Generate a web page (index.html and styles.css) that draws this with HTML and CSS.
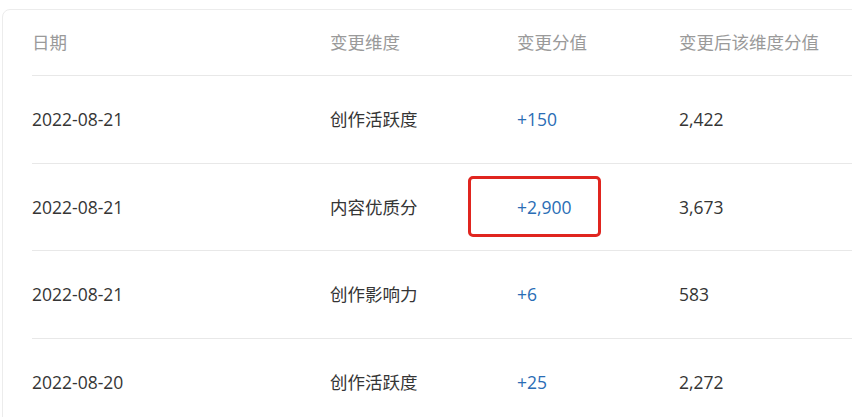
FILE: index.html
```html
<!DOCTYPE html>
<html lang="zh-CN">
<head>
<meta charset="utf-8">
<link rel="stylesheet" href="styles.css">
</head>
<body>
<div class="card">
  <div class="table">
    <div class="row head">
      <div class="cell">日期</div>
      <div class="cell">变更维度</div>
      <div class="cell">变更分值</div>
      <div class="cell">变更后该维度分值</div>
    </div>
    <div class="row">
      <div class="cell">2022-08-21</div>
      <div class="cell">创作活跃度</div>
      <div class="cell blue">+150</div>
      <div class="cell">2,422</div>
    </div>
    <div class="row">
      <div class="cell">2022-08-21</div>
      <div class="cell">内容优质分</div>
      <div class="cell blue marked">+2,900<span class="mark"></span></div>
      <div class="cell">3,673</div>
    </div>
    <div class="row">
      <div class="cell">2022-08-21</div>
      <div class="cell">创作影响力</div>
      <div class="cell blue">+6</div>
      <div class="cell">583</div>
    </div>
    <div class="row">
      <div class="cell">2022-08-20</div>
      <div class="cell">创作活跃度</div>
      <div class="cell blue">+25</div>
      <div class="cell">2,272</div>
    </div>
  </div>
</div>
</body>
</html>
```

FILE: styles.css
```css
html, body {
  margin: 0;
  padding: 0;
  background: #fff;
  overflow: hidden;
  width: 852px;
  height: 417px;
}
body {
  font-family: "Open Sans", "Noto Sans CJK SC", sans-serif;
  color: #353535;
}
.card {
  margin: 9px 0 0 2px;
  width: 900px;
  height: 460px;
  border: 1px solid #ececec;
  border-radius: 8px;
  box-sizing: border-box;
}
.table {
  padding-left: 29px;
}
.row {
  display: grid;
  grid-template-columns: 298px 187px 162px 1fr;
  align-items: center;
  height: 87.5px;
  border-top: 1px solid #e8e8e8;
  box-sizing: border-box;
  font-size: 17.5px;
}
.row.head {
  height: 65px;
  border-top: none;
  color: #9a9a9a;
  padding-bottom: 1px;
}
.cell {
  white-space: nowrap;
  line-height: 24px;
}
.blue {
  color: #2a6db5;
}
.marked {
  position: relative;
}
.mark {
  position: absolute;
  left: -49px;
  top: -19px;
  width: 133px;
  height: 61px;
  border: 3.5px solid #e0251f;
  border-radius: 5px;
  box-sizing: border-box;
}
```
